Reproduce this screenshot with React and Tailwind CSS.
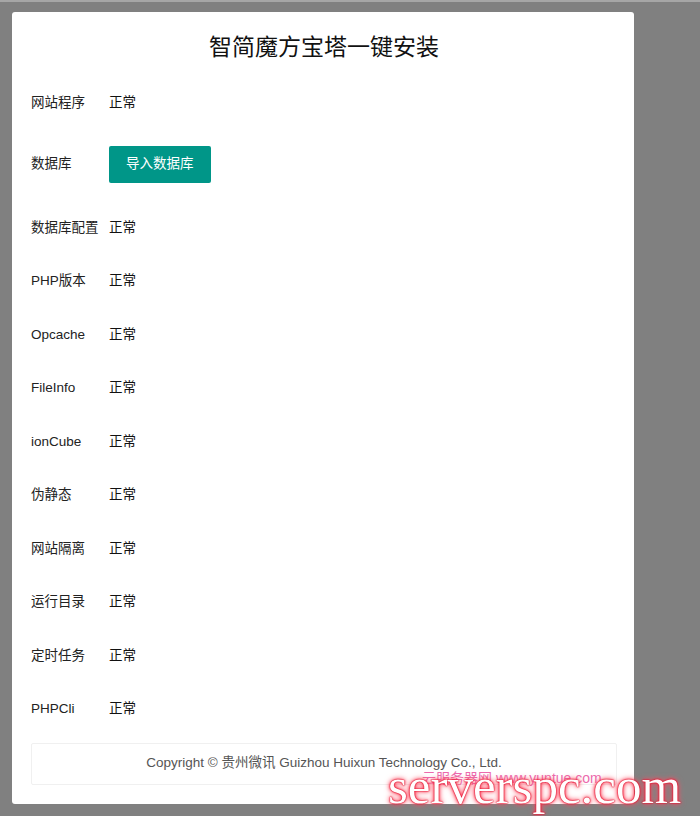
import React from "react";

const rows = [
  ["网站程序", "正常"],
  ["数据库", null],
  ["数据库配置", "正常"],
  ["PHP版本", "正常"],
  ["Opcache", "正常"],
  ["FileInfo", "正常"],
  ["ionCube", "正常"],
  ["伪静态", "正常"],
  ["网站隔离", "正常"],
  ["运行目录", "正常"],
  ["定时任务", "正常"],
  ["PHPCli", "正常"],
];

export default function App() {
  return (
    <div
      className="relative w-[700px] h-[816px] overflow-hidden bg-[#808080] border-t-2 border-[#a6a6a6] pt-[10px] pl-[12px]"
      style={{ fontFamily: '"Liberation Sans","Noto Sans CJK SC",sans-serif' }}
    >
      <div className="w-[622px] h-[792px] bg-white rounded-[3px] pl-[19px] pr-[17px] pt-[20px]">
        <h1 className="h-[30px] leading-[30px] text-center text-[23px] text-[#111] font-normal">
          智简魔方宝塔一键安装
        </h1>
        <div className="mt-[22px] flex flex-col gap-[15.5px]">
          {rows.map(([label, value]) =>
            value === null ? (
              <div key={label} className="flex items-center h-[38px] mt-[8px] mb-[10px]">
                <div className="w-[78px] text-[13.5px] text-[#222]">{label}</div>
                <button className="h-[37px] px-[17px] bg-[#009688] text-white text-[13.5px] rounded-[2px]">
                  导入数据库
                </button>
              </div>
            ) : (
              <div key={label} className="flex items-center h-[38px]">
                <div className="w-[78px] text-[13.5px] text-[#222] whitespace-nowrap">{label}</div>
                <div className="text-[13.5px] text-[#111]">{value}</div>
              </div>
            )
          )}
        </div>
        <div className="mt-[14px] h-[42px] border border-[#f0f0f0] rounded-[2px] flex items-center justify-center text-[13.5px] text-[#555]">
          Copyright © 贵州微讯 Guizhou Huixun Technology Co., Ltd.
        </div>
      </div>

      <div className="absolute left-[422px] top-[766px] text-[14px] text-[#e8469a] whitespace-nowrap opacity-80">
        云服务器网 www.yuntue.com
      </div>
      <div
        className="absolute left-[388px] top-[759px] text-[51px] leading-[51px] text-white whitespace-nowrap"
        style={{
          fontFamily: '"Liberation Serif",serif',
          textShadow:
            "0 0 1px #e0102a, 0 0 1px #e0102a, 0 0 2px #e0102a, 0 0 4px #ff3050, 0 0 6px #ff6070",
        }}
      >
        serverspc.com
      </div>
    </div>
  );
}
